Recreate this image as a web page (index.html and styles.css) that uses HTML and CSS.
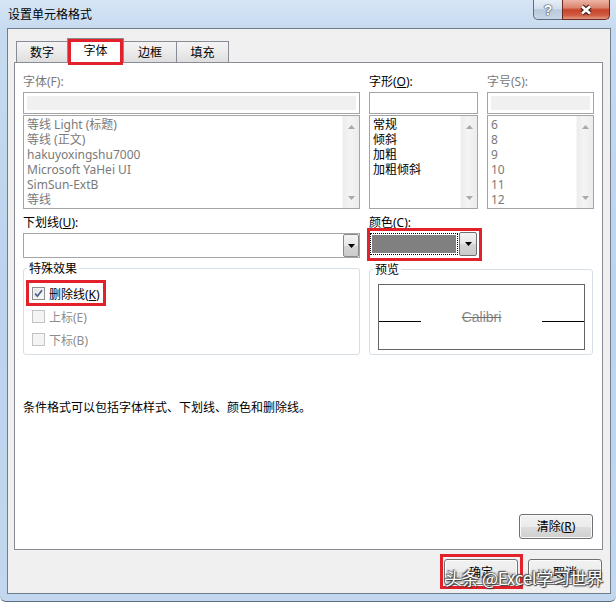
FILE: index.html
```html
<!DOCTYPE html>
<html lang="zh-CN">
<head>
<meta charset="utf-8">
<title>设置单元格格式</title>
<link rel="stylesheet" href="styles.css">
</head>
<body>
<div class="window">
  <div class="titlebar">
    <div class="title">设置单元格格式</div>
    <div class="caption">
      <div class="cbtn help">?</div>
      <div class="cbtn close">
        <svg width="16" height="12" viewBox="0 0 16 12"><path d="M4 2.5 L12 9.5 M12 2.5 L4 9.5" stroke="#4b231b" stroke-width="5"/><path d="M4 2.5 L12 9.5 M12 2.5 L4 9.5" stroke="#ffffff" stroke-width="2.6"/></svg>
      </div>
    </div>
  </div>
  <div class="client">
    <div class="tabs">
      <div class="tab">数字</div>
      <div class="tab active mark">字体</div>
      <div class="tab">边框</div>
      <div class="tab">填充</div>
    </div>
    <div class="panel">
      <div class="fonts">
        <div class="field">
          <div class="lbl dim">字体(F):</div>
          <div class="input off"></div>
          <div class="list">
            <div class="items dim">
              <div>等线 Light (标题)</div>
              <div>等线 (正文)</div>
              <div>hakuyoxingshu7000</div>
              <div>Microsoft YaHei UI</div>
              <div>SimSun-ExtB</div>
              <div>等线</div>
            </div>
            <div class="scroll">
              <svg width="7" height="4" viewBox="0 0 7 4"><path d="M0 4 L3.5 0 L7 4 Z" fill="#a9a9a9"/></svg>
              <svg width="7" height="4" viewBox="0 0 7 4"><path d="M0 0 L3.5 4 L7 0 Z" fill="#a9a9a9"/></svg>
            </div>
          </div>
        </div>
        <div class="field">
          <div class="lbl">字形(<u>O</u>):</div>
          <div class="input"></div>
          <div class="list">
            <div class="items">
              <div>常规</div>
              <div>倾斜</div>
              <div>加粗</div>
              <div>加粗倾斜</div>
            </div>
            <div class="scroll">
              <svg width="7" height="4" viewBox="0 0 7 4"><path d="M0 4 L3.5 0 L7 4 Z" fill="#a9a9a9"/></svg>
              <svg width="7" height="4" viewBox="0 0 7 4"><path d="M0 0 L3.5 4 L7 0 Z" fill="#a9a9a9"/></svg>
            </div>
          </div>
        </div>
        <div class="field">
          <div class="lbl dim">字号(S):</div>
          <div class="input off"></div>
          <div class="list">
            <div class="items dim">
              <div>6</div>
              <div>8</div>
              <div>9</div>
              <div>10</div>
              <div>11</div>
              <div>12</div>
            </div>
            <div class="scroll">
              <svg width="7" height="4" viewBox="0 0 7 4"><path d="M0 4 L3.5 0 L7 4 Z" fill="#a9a9a9"/></svg>
              <svg width="7" height="4" viewBox="0 0 7 4"><path d="M0 0 L3.5 4 L7 0 Z" fill="#a9a9a9"/></svg>
            </div>
          </div>
        </div>

        <div class="field row2">
          <div class="lbl">下划线(<u>U</u>):</div>
          <div class="combo under">
            <div class="combo-text"></div>
            <div class="drop"><svg width="7" height="4" viewBox="0 0 7 4"><path d="M0 0 L3.5 4 L7 0 Z" fill="#000"/></svg></div>
          </div>
        </div>
        <div class="field row2">
          <div class="lbl">颜色(<u>C</u>):</div>
          <div class="combo color mark">
            <div class="swatch-wrap"><div class="swatch"></div></div>
            <div class="drop"><svg width="7" height="4" viewBox="0 0 7 4"><path d="M0 0 L3.5 4 L7 0 Z" fill="#000"/></svg></div>
          </div>
        </div>

        <fieldset class="group effects">
          <legend>特殊效果</legend>
          <div class="check mark">
            <span class="box on"><svg width="9" height="9" viewBox="0 0 9 9"><path d="M1.2 4.6 L3.4 7.2 L8 1.2" fill="none" stroke="#4a5d8e" stroke-width="1.7"/></svg></span>
            <span>删除线(<u>K</u>)</span>
          </div>
          <div class="check disabled">
            <span class="box"></span>
            <span>上标(E)</span>
          </div>
          <div class="check disabled">
            <span class="box"></span>
            <span>下标(B)</span>
          </div>
        </fieldset>

        <fieldset class="group preview-group">
          <legend>预览</legend>
          <div class="preview">
            <div class="pline"></div>
            <div class="sample">Calibri</div>
            <div class="pline"></div>
          </div>
        </fieldset>
      </div>

      <p class="desc">条件格式可以包括字体样式、下划线、颜色和删除线。</p>

      <div class="clear-row">
        <div class="btn">清除(<u>R</u>)</div>
      </div>
    </div>
    <div class="footer">
      <div class="btn mark ok">确定</div>
      <div class="btn">取消</div>
    </div>
  </div>
  <div class="watermark">头条 @Excel学习世界</div>
</div>
</body>
</html>
```

FILE: styles.css
```css
* { box-sizing: border-box; }
html, body { margin: 0; padding: 0; }
body {
  width: 616px;
  height: 602px;
  overflow: hidden;
  font-family: "Noto Sans", "Noto Sans CJK SC", sans-serif;
  font-size: 12px;
  color: #000;
  background: #ffffff;
}
u { text-decoration: underline; text-underline-offset: 1px; }

.window {
  position: relative;
  width: 616px;
  height: 602px;
  display: flex;
  flex-direction: column;
  background: linear-gradient(180deg, #d6e5f6 0px, #c7dbf0 28px, #bcd3ec 300px, #c3d8ee 602px);
  border-bottom: 1px solid #5b6d82;
  border-radius: 0 0 6px 6px;
}

.titlebar {
  height: 28px;
  display: flex;
  justify-content: space-between;
  align-items: flex-start;
}
.title {
  padding: 7px 0 0 8px;
  line-height: 16px;
  font-size: 12px;
}
.caption { display: flex; margin-right: 6px; }
.cbtn {
  height: 20px;
  border: 1px solid #5c6c82;
  border-top: none;
  display: flex;
  align-items: center;
  justify-content: center;
}
.help {
  width: 30px;
  border-radius: 0 0 0 5px;
  background: linear-gradient(180deg, #e6eef8 0%, #d3dfec 45%, #b8c9dc 52%, #c9d7e7 100%);
  font-family: "Liberation Sans", sans-serif;
  font-weight: bold;
  font-size: 14px;
  color: #fff;
  text-shadow: 0 0 1px #3b4a5e, 0 0 1px #3b4a5e, 0 0 2px #3b4a5e;
  line-height: 18px;
}
.close {
  width: 48px;
  margin-left: -1px;
  border-color: #6b2a22;
  border-radius: 0 0 5px 0;
  background: linear-gradient(180deg, #ecb4a5 0%, #dc8470 40%, #c6452b 52%, #cf5c42 80%, #e39a82 100%);
}

.client {
  margin: 0 5px 0 7px;
  height: 566px;
  border: 1px solid #6f7d8e;
  background: #f0f0f0;
  padding: 9px 7px 0 6px;
  display: flex;
  flex-direction: column;
}

.tabs {
  display: flex;
  align-items: flex-end;
  height: 24px;
  padding-left: 2px;
  position: relative;
  z-index: 2;
}
.tab {
  height: 21px;
  border: 1px solid #898c95;
  border-bottom: none;
  background: linear-gradient(180deg, #f4f4f4 0%, #ebebeb 50%, #dedede 100%);
  display: flex;
  align-items: center;
  justify-content: center;
  line-height: 15px;
  margin-left: -1px;
}
.tab:nth-child(1) { width: 52px; margin-left: 0; }
.tab:nth-child(2) { width: 57px; }
.tab:nth-child(3) { width: 54px; }
.tab:nth-child(4) { width: 53px; }
.tab.active {
  height: 25px;
  margin-bottom: -1px;
  background: #fff;
  padding-bottom: 2px;
  position: relative;
  z-index: 3;
}

.mark { position: relative; }
.mark::after {
  content: "";
  position: absolute;
  border: 3px solid #e3212a;
  pointer-events: none;
}
.tab.mark::after { left: 0; right: 0; top: 0; bottom: -2px; }

.panel {
  height: 488px;
  border: 1px solid #898c95;
  background: #fff;
  padding: 11px 8px 10px 8px;
  display: flex;
  flex-direction: column;
  position: relative;
  z-index: 1;
}

.fonts {
  display: grid;
  grid-template-columns: 337px 109px 107px;
  column-gap: 9px;
  align-items: start;
}
.field { display: flex; flex-direction: column; }
.lbl { line-height: 15px; height: 15px; white-space: nowrap; }
.dim { color: #7a7a7a; }

.input {
  margin-top: 3px;
  height: 22px;
  border: 1px solid #a5a5a5;
  background: #fff;
}
.input.off {
  background: #f0f0f0;
  box-shadow: inset 0 0 0 3px #fff;
}

.list {
  margin-top: 1px;
  height: 94px;
  border: 1px solid #a5a5a5;
  display: flex;
  background: #fff;
}
.items {
  flex: 1;
  padding: 1px 3px;
  line-height: 15px;
  overflow: hidden;
  white-space: nowrap;
}
.scroll {
  width: 17px;
  background: linear-gradient(90deg, #ececec, #f4f4f4 40%, #ececec);
  border-left: 1px solid #f7f7f7;
  display: flex;
  flex-direction: column;
  justify-content: space-between;
  align-items: center;
  padding: 9px 0 8px;
}
.scroll svg { display: block; }

.row2 .lbl { margin-top: 6px; }
.combo {
  display: flex;
  background: #fff;
}
.combo.under {
  margin-top: 3px;
  height: 25px;
  border: 1px solid #a5a5a5;
  padding: 0 0 0 0;
}
.combo-text { flex: 1; }
.drop {
  width: 16px;
  border: 1px solid #8a8a8a;
  border-radius: 2px;
  background: linear-gradient(180deg, #f4f4f4 0%, #e6e6e6 50%, #d5d5d5 51%, #cbcbcb 100%);
  display: flex;
  align-items: center;
  justify-content: center;
}
.drop svg { display: block; }
.combo.under .drop { margin: 0 0 0 0; height: 23px; }

.combo.color {
  margin-top: 1px;
  height: 26px;
  padding: 1px 1px 1px 1px;
  gap: 1px;
}
.combo.color::after { left: -2px; right: -4px; top: -3px; bottom: -4px; }
.swatch-wrap {
  flex: 1;
  margin: 1px 0;
  border: 1px dotted #000;
  padding: 1px;
}
.swatch { height: 100%; background: #808080; }
.combo.color .drop { width: 18px; border-color: #6f6f6f; }

.group {
  margin: 3px 0 0 0;
  padding: 6px 8px 3px 8px;
  border: 1px solid #d5dfe5;
  border-radius: 3px;
  min-width: 0;
}
.group legend {
  padding: 0 2px;
  margin-left: -5px;
  line-height: 15px;
}
.effects { grid-column: 1; }
.preview-group {
  grid-column: 2 / 4;
  width: 224px;
  margin-top: 4px;
  padding: 7px 7px 4px 8px;
}

.check {
  display: flex;
  align-items: center;
  gap: 4px;
  height: 23px;
  width: max-content;
}
.check.mark::after { left: -6px; right: -6px; top: -2px; bottom: -1px; }
.check.disabled { color: #8d8d8d; }
.box {
  width: 13px;
  height: 13px;
  border: 1px solid #8e8f8f;
  background: linear-gradient(135deg, #dcdde0 0%, #f6f6f6 70%, #ffffff 100%);
  box-shadow: inset 0 0 0 1px #f4f4f4;
  display: flex;
  align-items: center;
  justify-content: center;
}
.box svg { display: block; }
.check.disabled .box {
  border-color: #c4c4c4;
  background: #f4f4f4;
  box-shadow: none;
}

.preview {
  height: 66px;
  border: 1px solid #646464;
  display: flex;
  align-items: center;
  justify-content: space-between;
}
.pline {
  width: 42px;
  height: 1px;
  background: #000;
  margin-top: 9px;
}
.sample {
  font-family: "Liberation Sans", sans-serif;
  font-size: 14px;
  line-height: 16px;
  color: #8a8a8a;
  text-decoration: line-through;
  text-decoration-color: #707070;
}

.desc {
  margin: 45px 0 0 0;
  line-height: 15px;
}

.clear-row {
  margin-top: auto;
  display: flex;
  justify-content: flex-end;
  padding-right: 1px;
}

.btn {
  width: 74px;
  height: 25px;
  border: 1px solid #707070;
  border-radius: 3px;
  background: linear-gradient(180deg, #f2f2f2 0%, #ebebeb 50%, #dddddd 51%, #cfcfcf 100%);
  box-shadow: inset 0 0 0 1px #fbfbfb;
  display: flex;
  align-items: center;
  justify-content: center;
  line-height: 15px;
}

.footer {
  margin-top: 9px;
  display: flex;
  justify-content: flex-end;
  gap: 10px;
  padding-right: 1px;
}
.footer .btn { height: 26px; }
.btn.ok::after { left: -5px; right: -6px; top: -6px; bottom: -5px; }

.watermark {
  position: absolute;
  left: 445px;
  top: 567px;
  font-family: "Noto Sans CJK SC", sans-serif;
  font-size: 17px;
  line-height: 22px;
  color: #ffffff;
  letter-spacing: -0.3px;
  white-space: nowrap;
  text-shadow: 0 0 2px #2a2a2a, 1px 1px 1px #3a3a3a, -1px -1px 1px #5a5a5a;
  z-index: 5;
}
```
